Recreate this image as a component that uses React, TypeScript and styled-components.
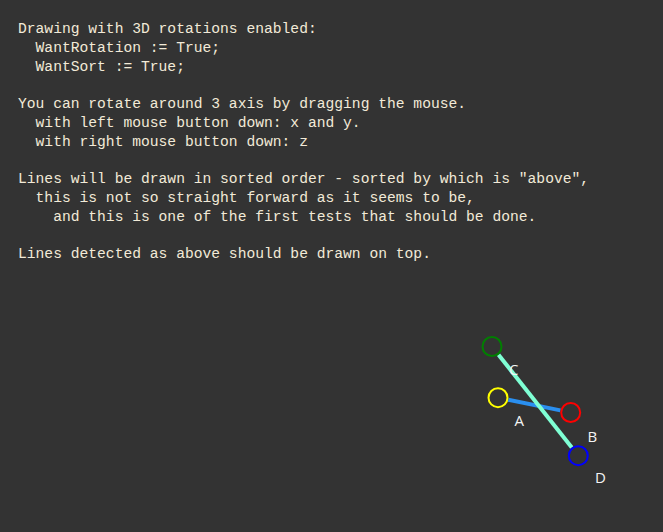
import React from "react";
import styled, { createGlobalStyle } from "styled-components";

const Global = createGlobalStyle`
  html, body { margin: 0; padding: 0; background: #333333; }
  #root { width: 663px; height: 532px; }
`;

const Page = styled.div`
  position: relative;
  width: 663px;
  height: 532px;
  background: #333333;
  overflow: hidden;
  display: flex;
  flex-direction: column;
`;

const Notes = styled.pre`
  margin: 0;
  padding: 20px 0 0 18px;
  font-family: "Liberation Mono", "DejaVu Sans Mono", monospace;
  font-size: 14.65px;
  line-height: 18.75px;
  color: #f2ead8;
  white-space: pre;
`;

const Canvas = styled.svg`
  position: absolute;
  left: 0;
  top: 0;
  width: 663px;
  height: 532px;
  pointer-events: none;
`;

const Label = styled.text`
  font-family: "Open Sans", "Noto Sans", sans-serif;
  font-size: 15px;
  fill: #f4f4f4;
`;

type P = { x: number; y: number };
const R = 9.5;

function trim(a: P, b: P, r: number): [P, P] {
  const dx = b.x - a.x;
  const dy = b.y - a.y;
  const len = Math.hypot(dx, dy);
  const ux = dx / len;
  const uy = dy / len;
  return [
    { x: a.x + ux * r, y: a.y + uy * r },
    { x: b.x - ux * r, y: b.y - uy * r },
  ];
}

const A: P = { x: 498, y: 397.7 };
const B: P = { x: 570.7, y: 412.5 };
const C: P = { x: 492, y: 346.5 };
const D: P = { x: 578.3, y: 455.7 };

const text = `Drawing with 3D rotations enabled:
  WantRotation := True;
  WantSort := True;

You can rotate around 3 axis by dragging the mouse.
  with left mouse button down: x and y.
  with right mouse button down: z

Lines will be drawn in sorted order - sorted by which is "above",
  this is not so straight forward as it seems to be,
    and this is one of the first tests that should be done.

Lines detected as above should be drawn on top.`;

export default function App() {
  const [ab1, ab2] = trim(A, B, R + 1);
  const [cd1, cd2] = trim(C, D, R + 1);
  return (
    <>
      <Global />
      <Page>
        <Notes>{text}</Notes>
        <Canvas viewBox="0 0 663 532">
          <line x1={ab1.x} y1={ab1.y} x2={ab2.x} y2={ab2.y} stroke="#2a8fef" strokeWidth={4} />
          <line x1={cd1.x} y1={cd1.y} x2={cd2.x} y2={cd2.y} stroke="#7fffd4" strokeWidth={4} />
          <circle cx={C.x} cy={C.y} r={R} fill="none" stroke="#008000" strokeWidth={2} />
          <circle cx={A.x} cy={A.y} r={R} fill="none" stroke="#ffff00" strokeWidth={2} />
          <circle cx={B.x} cy={B.y} r={R} fill="none" stroke="#ff0000" strokeWidth={2} />
          <circle cx={D.x} cy={D.y} r={R} fill="none" stroke="#0000ff" strokeWidth={2} />
          <Label x={509} y={375}>C</Label>
          <Label x={514.5} y={426}>A</Label>
          <Label x={587.5} y={441.5}>B</Label>
          <Label x={595} y={482.5}>D</Label>
        </Canvas>
      </Page>
    </>
  );
}
